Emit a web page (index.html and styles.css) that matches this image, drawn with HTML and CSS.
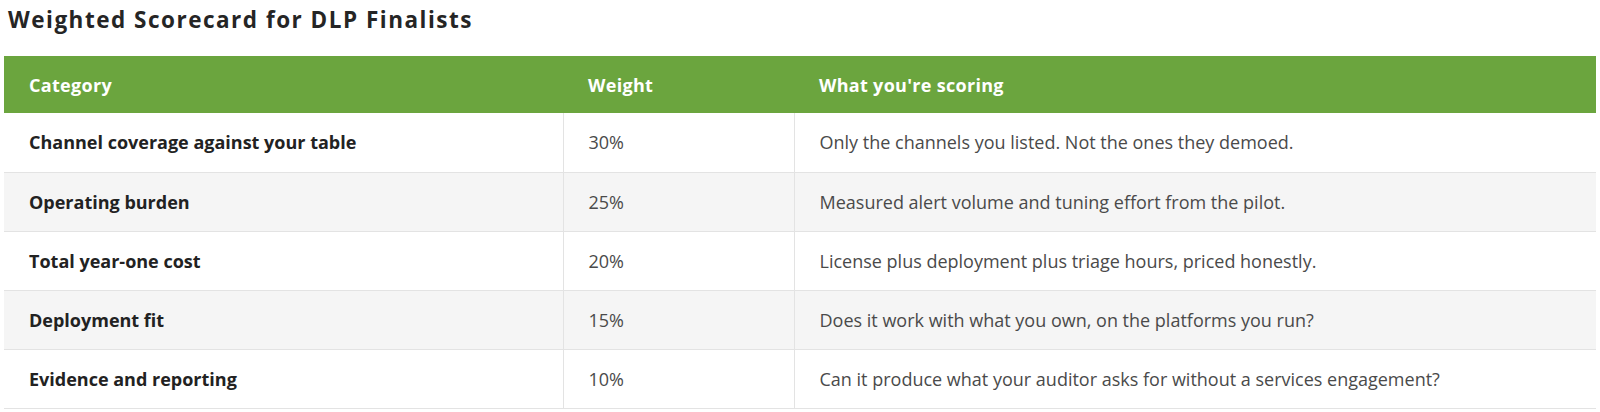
FILE: index.html
```html
<!DOCTYPE html>
<html>
<head>
<meta charset="utf-8">
<link rel="stylesheet" href="styles.css">
</head>
<body>
<h2 class="title">Weighted Scorecard for DLP Finalists</h2>
<table class="score">
  <thead>
    <tr><th class="c1">Category</th><th class="c2">Weight</th><th class="c3">What you're scoring</th></tr>
  </thead>
  <tbody>
    <tr><td class="cat">Channel coverage against your table</td><td>30%</td><td>Only the channels you listed. Not the ones they demoed.</td></tr>
    <tr><td class="cat">Operating burden</td><td>25%</td><td>Measured alert volume and tuning effort from the pilot.</td></tr>
    <tr><td class="cat">Total year-one cost</td><td>20%</td><td>License plus deployment plus triage hours, priced honestly.</td></tr>
    <tr><td class="cat">Deployment fit</td><td>15%</td><td>Does it work with what you own, on the platforms you run?</td></tr>
    <tr><td class="cat">Evidence and reporting</td><td>10%</td><td>Can it produce what your auditor asks for without a services engagement?</td></tr>
  </tbody>
</table>
</body>
</html>
```
FILE: styles.css
```css
html, body { margin: 0; padding: 0; background: #fff; }
body { padding: 0 4px; }
.title {
  font-family: "Open Sans", sans-serif;
  font-weight: 700;
  font-size: 22.5px;
  line-height: 30px;
  letter-spacing: 1.5px;
  color: #252525;
  margin: 0;
  padding: 5px 0 0 4px;
  height: 56px;
  box-sizing: border-box;
}
.score {
  width: 1592px;
  border-collapse: collapse;
  font-family: "Open Sans", sans-serif;
  font-size: 18px;
  color: #4a4a4a;
}
.score th {
  background: #6ba53e;
  color: #fff;
  text-align: left;
  font-family: "Open Sans", sans-serif;
  font-weight: 700;
  font-size: 18px;
  letter-spacing: 0.3px;
  height: 57px;
  padding: 0 25px;
  box-sizing: border-box;
}
.c1 { width: 559px; }
.c2 { width: 231px; }
.score td {
  height: 59px;
  padding: 0 25px;
  box-sizing: border-box;
  border-bottom: 1px solid #e3e3e3;
  border-left: 1px solid #e3e3e3;
}
.score td:first-child { border-left: none; }
.score tbody tr:nth-child(even) td { background: #f5f5f5; }
.score td.cat { font-weight: 700; color: #222; }
```
